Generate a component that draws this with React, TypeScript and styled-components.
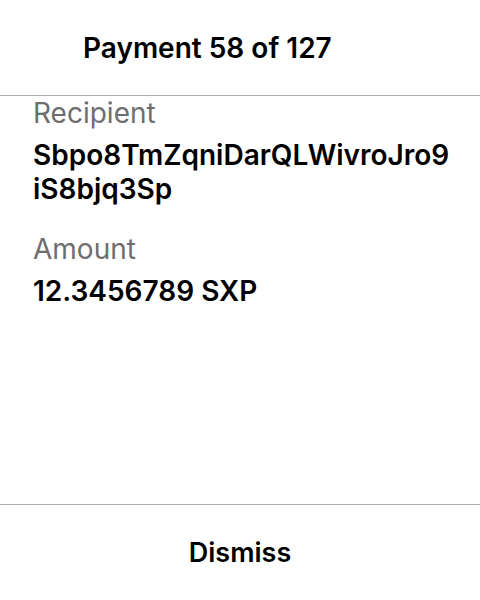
import React from "react";
import styled, { createGlobalStyle } from "styled-components";

const Global = createGlobalStyle`
  html, body { margin: 0; padding: 0; background: #ffffff; }
  body { font-family: Inter, "Noto Sans", "Liberation Sans", sans-serif; -webkit-font-smoothing: antialiased; }
  * { box-sizing: border-box; }
`;

const Screen = styled.div`
  display: flex;
  flex-direction: column;
  width: 480px;
  height: 600px;
  background: #ffffff;
`;

const Header = styled.header`
  display: flex;
  align-items: center;
  height: 96px;
  padding-left: 83px;
  border-bottom: 1px solid #ababab;
`;

const Title = styled.h1`
  margin: 0;
  font-size: 28px;
  font-weight: 600;
  color: #000000;
`;

const Body = styled.main`
  flex: 1;
  display: flex;
  flex-direction: column;
  gap: 26px;
  padding: 0 28px 0 33px;
`;

const Field = styled.section`
  display: flex;
  flex-direction: column;
  gap: 8px;
`;

const Label = styled.div`
  font-size: 28px;
  line-height: 34px;
  font-weight: 400;
  color: #6e6e6e;
`;

const Value = styled.div`
  font-size: 28px;
  line-height: 34px;
  font-weight: 600;
  color: #000000;
  word-break: break-all;
`;

const Footer = styled.footer`
  display: flex;
  align-items: center;
  justify-content: center;
  height: 96px;
  border-top: 1px solid #ababab;
`;

const DismissButton = styled.button`
  border: none;
  background: none;
  padding: 0;
  font-family: inherit;
  font-size: 27px;
  font-weight: 600;
  color: #000000;
  cursor: pointer;
`;

export default function App() {
  return (
    <>
      <Global />
      <Screen>
        <Header>
          <Title>Payment 58 of 127</Title>
        </Header>
        <Body>
          <Field>
            <Label>Recipient</Label>
            <Value>Sbpo8TmZqniDarQLWivroJro9iS8bjq3Sp</Value>
          </Field>
          <Field>
            <Label>Amount</Label>
            <Value>12.3456789 SXP</Value>
          </Field>
        </Body>
        <Footer>
          <DismissButton>Dismiss</DismissButton>
        </Footer>
      </Screen>
    </>
  );
}
